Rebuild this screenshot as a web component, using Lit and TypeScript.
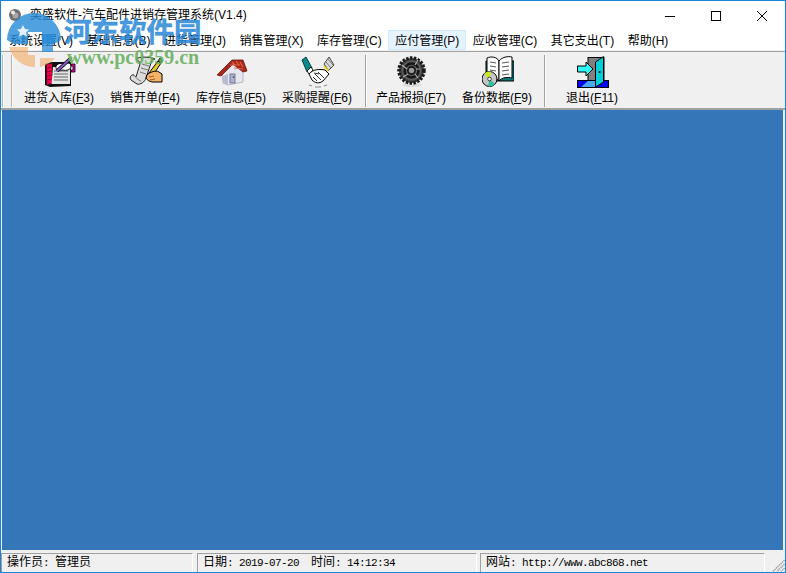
import { LitElement, html, css, svg } from "lit";
import { customElement } from "lit/decorators.js";

const icons: Record<string, unknown> = {
  in: svg`<svg width="32" height="32" viewBox="0 0 32 32">
    <path d="M1 8 L8 6 H27 V30 L6 31 L1 29Z" fill="#111"/>
    <path d="M2.5 9 L8 7.5 V27 L3 29Z" fill="#f0004a"/>
    <path d="M3 12l5-1M3 16l5-1M3 20l5-1M3 24l5-1" stroke="#7a0026" stroke-width=".9"/>
    <path d="M9 11 H26 V28 H7.5Z" fill="#e4e4e4"/>
    <path d="M10 15h14M10 18h14M10 21h14M10 24h14" stroke="#666" stroke-width="1.1"/>
    <path d="M12 10c2-3 6-3 8-2 3-2 7-1 7 2 0 4-5 5-8 4-3 1-8 0-7-4Z" fill="#fff" stroke="#000" stroke-width=".9"/>
    <path d="M27 8h4v8h-4v-2h2v-4h-2Z" fill="#f000a8" stroke="#000" stroke-width=".8"/>
    <path d="M13 15 L26 3" stroke="#000" stroke-width="3.6"/>
    <path d="M13 15 L26 3" stroke="#8a58c8" stroke-width="2"/>
    <path d="M25 4l3-3" stroke="#70b060" stroke-width="2.4"/>
  </svg>`,
  sale: svg`<svg width="34" height="32" viewBox="0 0 34 32">
    <path d="M7 3 C10 0 22 1 26 3 C23 3 22 5 22 7 L17 22 C16 26 11 29 8 28 L2 24 C0 22 2 18 5 19 L7 21 L11 8 C11 6 9 4 7 3Z" fill="#d9dcd9" stroke="#222" stroke-width="1"/>
    <path d="M13 8l7 2M12 12l7 2M11 16l6 2" stroke="#777"/>
    <path d="M5 19c2 3 4 5 7 6" stroke="#777" fill="none"/>
    <path d="M17 21 L29 5 L32 7 L21 24Z" fill="#e8c820" stroke="#000"/>
    <path d="M29 5l2-3 2 2-1 3Z" fill="#60a040" stroke="#000" stroke-width=".8"/>
    <path d="M18 19c3-3 9-5 12-3l3 2v8h-9c-3 0-6-2-7-4Z" fill="#f3b468" stroke="#000"/>
    <path d="M20 21l5-1M21 24l5-1" stroke="#904010" stroke-width=".8"/>
  </svg>`,
  stock: svg`<svg width="32" height="32" viewBox="0 0 32 32">
    <path d="M6 16 L7 27 L12 29 L27 26 V15 L16 8Z" fill="#e6e6ee" stroke="#aab" stroke-width=".8"/>
    <path d="M12 18 L7 20 V27 L12 29Z" fill="#b8bcd0"/>
    <path d="M1 19 L12 8 L16 4 L27 4 L31 15 L27 16 L17 8 L5 20Z" fill="#a8281c" stroke="#701008" stroke-width=".8"/>
    <path d="M16 6l3 3M20 5l3 4M24 6l3 5M14 9l10 0M18 12l9 1" stroke="#e06848" stroke-width="1.1"/>
    <rect x="14" y="18" width="5" height="9" fill="#a8b4d8" stroke="#667" stroke-width=".8"/>
    <circle cx="17.5" cy="21" r=".8" fill="#334"/>
  </svg>`,
  deal: svg`<svg width="34" height="32" viewBox="0 0 34 32">
    <path d="M1 4 L5 1 L11 12 L6 16Z" fill="#0a8a8a" stroke="#033" stroke-width=".9"/>
    <path d="M6 15 L10 11 L12 14 L8 18Z" fill="#fff" stroke="#000" stroke-width=".9"/>
    <path d="M28 1 L33 9 L27 15 L23 8Z" fill="#d8d8d8" stroke="#333" stroke-width=".9"/>
    <path d="M25 6l5 6M27 3l5 6M24 9l3 5" stroke="#666" stroke-width=".8"/>
    <path d="M23 10l4 5" stroke="#f0d820" stroke-width="2"/>
    <path d="M8 18 C12 13 19 13 24 14 L28 18 L22 25 C18 28 14 27 11 24Z" fill="#fff" stroke="#000"/>
    <path d="M14 18l6 6M17 16l6 6M12 21l4 4M18 18l-5-1" stroke="#000" stroke-width=".8"/>
    <path d="M8 29l3 1M26 29l-3 1M14 31h6" stroke="#888"/>
  </svg>`,
  gear: svg`<svg width="32" height="32" viewBox="0 0 32 32">
    <ellipse cx="16" cy="29" rx="10" ry="2" fill="#ddd"/>
    <circle cx="15.5" cy="14.5" r="12.5" fill="#444" stroke="#1a1a1a" stroke-width="3.5" stroke-dasharray="2.4 1.4"/>
    <circle cx="15.5" cy="14.5" r="10" fill="#5a5a5a"/>
    <circle cx="15.5" cy="14.5" r="7" fill="none" stroke="#161616" stroke-width="2.4"/>
    <circle cx="15.5" cy="14.5" r="3.6" fill="#999" stroke="#111" stroke-width="1.6"/>
    <path d="M6 9l5 4M22 4l-3 5M7 21l5-3M22 22l-3-4M24 13h-4" stroke="#aaa" stroke-width="1.2"/>
  </svg>`,
  backup: svg`<svg width="32" height="32" viewBox="0 0 32 32">
    <path d="M4 5 H32 V25 H4Z" fill="#0a7a7a" stroke="#000"/>
    <path d="M5 2 C9 0 15 1 17 5 V25 C14 21 9 21 5 22Z" fill="#fff" stroke="#000"/>
    <path d="M17 5 C20 1 26 0 30 1 V22 C26 21 20 21 17 25Z" fill="#fff" stroke="#000"/>
    <path d="M8 6l6 1M8 10l6 1M8 14l6 1M20 7l7-1M20 11l7-1M20 15l7-1M20 19l7-1" stroke="#555"/>
    <circle cx="7.5" cy="23" r="7.5" fill="#c6c6c6" stroke="#000"/>
    <path d="M7.5 23 L2 18 A7.5 7.5 0 0 1 9 15.7Z" fill="#c8e820"/>
    <path d="M7.5 23 L13 28 A7.5 7.5 0 0 1 6 30.3Z" fill="#30c0a0"/>
    <circle cx="7.5" cy="23" r="1.8" fill="#fff" stroke="#000" stroke-width=".7"/>
  </svg>`,
  exit: svg`<svg width="32" height="32" viewBox="0 0 32 32">
    <rect x=".5" y="24.5" width="31" height="7" fill="#0000f0" stroke="#000"/>
    <path d="M11 25h9v6H4Z" fill="#48a8f8"/>
    <rect x="11" y="1.5" width="16" height="23" fill="#808080" stroke="#000"/>
    <path d="M18.5 6 L26.5 .5 V26 L18.5 31Z" fill="#00d0d8" stroke="#000"/>
    <circle cx="22.5" cy="16" r="1.1" fill="#000"/>
    <path d="M.5 10 H9 V6 L16 13 L9 20 V16 H.5Z" fill="#30f8f8" stroke="#000"/>
  </svg>`,
};

const TOOL = [
  [["in", "进货入库(", "F", "3)"], ["sale", "销售开单(", "F", "4)"], ["stock", "库存信息(", "F", "5)"], ["deal", "采购提醒(", "F", "6)"]],
  [["gear", "产品报损(", "F", "7)"], ["backup", "备份数据(", "F", "9)"]],
  [["exit", "退出(", "F", "11)"]],
];
const MENUS = ["系统设置(V)", "基础信息(B)", "进货管理(J)", "销售管理(X)", "库存管理(C)", "应付管理(P)", "应收管理(C)", "其它支出(T)", "帮助(H)"];

@customElement("app-root")
export class AppRoot extends LitElement {
  static styles = css`
    :host { display: block; width: 786px; height: 573px; font-family: "Liberation Sans", "Noto Sans CJK SC", sans-serif; }
    .win { position: relative; box-sizing: border-box; width: 786px; height: 573px; border: 1px solid #1883d7; background: #f0f0f0; display: flex; flex-direction: column; overflow: hidden; }
    .title { height: 29px; background: #fff; display: flex; align-items: center; flex: none; }
    .appicon { margin: 0 0 2px 7px; flex: none; }
    .title span { margin-left: 8px; font-size: 12px; line-height: 16px; margin-bottom: 1px; color: #000; flex: 1; }
    .cap { display: flex; flex: none; }
    .cap div { width: 46px; height: 29px; display: flex; align-items: center; justify-content: center; }
    .menu { height: 21px; box-sizing: border-box; background: #fff; display: flex; flex: none; padding-left: 1.25px; border-bottom: 1px solid #f0f0f0; }
    .menu div { box-sizing: border-box; height: 20px; padding: 1px 5.75px 0; font-size: 12px; color: #000; white-space: nowrap; border: 1px solid transparent; line-height: 18px; }
    .menu div.hot { background: #e5f3ff; border-color: #cce8ff; }
    .bar { height: 59px; flex: none; display: flex; box-sizing: border-box; border-top: 1px solid #a0a0a0; border-bottom: 2px solid #a0a0a0; background: #f0f0f0; }
    .grip { width: 1px; height: 52px; margin: 3px 0 0 1px; background: #b4b4b4; border-right: 1px solid #fff; flex: none; }
    .grip + .grip { margin-left: 7px; margin-right: 3px; }
    .group { display: flex; flex: none; }
    .tool { width: 86px; display: flex; flex-direction: column; align-items: center; font-size: 12px; color: #000; white-space: nowrap; padding-top: 4px; }
    .box { height: 32px; display: flex; align-items: flex-start; justify-content: center; padding-left: 2px; }
    .lab { line-height: 16px; margin-top: 2px; }
    u { text-decoration: underline; text-underline-offset: 1px; }
    .sep { width: 1px; height: 52px; background: #a0a0a0; border-right: 1px solid #fff; flex: none; margin: 3px 1px 0 5px; }
    .sep.last { margin: 3px 3px 0 4px; }
    .client { flex: 1; background: #3476b8; margin: 0 2px 0 1px; }
    .status { height: 22px; flex: none; display: flex; background: #f0f0f0; font-size: 12px; padding: 3px 0 0 0; box-sizing: border-box; position: relative; }
    .pane { box-sizing: border-box; height: 19px; flex: none; border-top: 1px solid #a0a0a0; border-left: 1px solid #a0a0a0; border-right: 1px solid #fff; padding-left: 5px; line-height: 17px; white-space: pre; color: #000; }
    .mono { font-family: "Liberation Mono", monospace; font-size: 11px; letter-spacing: -.6px; }
    .p1 { width: 192px; margin-right: 4px; } .p2 { width: 280px; margin-right: 3px; } .p3 { width: 285px; }
    .grips { position: absolute; right: 0; bottom: 0; }
    .wm { position: absolute; left: -1px; top: -1px; width: 210px; height: 70px; pointer-events: none; }
    .wm1 { position: absolute; left: 64px; top: 12px; font-family: "Noto Sans CJK SC", sans-serif; font-weight: 700; font-size: 27.5px; line-height: 36px; color: rgba(40,135,215,.85); -webkit-text-stroke: .5px rgba(40,135,215,.85); white-space: nowrap; }
    .wm2 { position: absolute; left: 67px; top: 45px; font-family: "Liberation Serif", serif; font-weight: 700; font-size: 20px; line-height: 24px; color: rgba(105,175,95,.9); white-space: nowrap; }
    .wmlogo { position: absolute; left: 4px; top: 10px; }
  `;

  render() {
    return html`<div class="win">
      <div class="title">
        <svg class="appicon" width="14" height="14" viewBox="0 0 14 14"><circle cx="7" cy="7" r="6" fill="#6e6e6e"/><circle cx="7.5" cy="7.5" r="3" fill="#a8a8a8"/><circle cx="5" cy="4.5" r="2" fill="#eee"/></svg>
        <span>奕盛软件-汽车配件进销存管理系统(V1.4)</span>
        <div class="cap">
          <div><svg width="10" height="10"><path d="M0 5.5h10" stroke="#000"/></svg></div>
          <div><svg width="10" height="10"><rect x=".5" y=".5" width="9" height="9" fill="none" stroke="#000"/></svg></div>
          <div><svg width="10" height="10"><path d="M0 0L10 10M10 0L0 10" stroke="#000"/></svg></div>
        </div>
      </div>
      <div class="menu">
        ${MENUS.map((m, i) => html`<div class=${i === 5 ? "hot" : ""}>${m}</div>`)}
      </div>
      <div class="bar">
        <div class="grip"></div>
        <div class="grip"></div>
        ${TOOL.map((g, gi) => html`
          ${gi ? html`<div class=${gi === 2 ? "sep last" : "sep"}></div>` : ""}
          <div class="group">
            ${g.map(t => html`<div class="tool"><div class="box">${icons[t[0]]}</div><div class="lab">${t[1]}<u>${t[2]}</u>${t[3]}</div></div>`)}
          </div>`)}
      </div>
      <div class="client"></div>
      <div class="status">
        <div class="pane p1">操作员<span class="mono">: </span>管理员</div>
        <div class="pane p2">日期<span class="mono">: 2019-07-20  </span>时间<span class="mono">: 14:12:34</span></div>
        <div class="pane p3">网站<span class="mono">: http://www.abc868.net</span></div>
        <svg class="grips" width="13" height="13"><path d="M12.5 1L1 12.5M12.5 5L5 12.5M12.5 9L9 12.5" stroke="#a0a0a0" stroke-width="1.6" stroke-dasharray="1.4 .7"/></svg>
      </div>
      <div class="wm">
        <svg class="wmlogo" width="60" height="60" viewBox="0 0 60 60">
          <path d="M3 30 A27 27 0 0 1 57 30 L50 34 H38 V22 H24 V34 H10Z" fill="#2a8cd8" opacity=".82"/>
          <path d="M38 24h11v18H38Z" fill="#2a8cd8" opacity=".75"/>
          <path d="M19 15l2 4 4 .5-3 3 1 4-4-2-4 2 1-4-3-3 4-.5Z" fill="#fff" opacity=".85"/>
          <path d="M5 37 H24 V45 H31 V57 A27 27 0 0 1 5 37Z" fill="#f4a860" opacity=".6"/>
          <path d="M36 48h15 A27 27 0 0 1 36 57Z" fill="#f4a860" opacity=".6"/>
        </svg>
        <div class="wm1">河东软件园</div>
        <div class="wm2">www.pc0359.cn</div>
      </div>
    </div>`;
  }
}
